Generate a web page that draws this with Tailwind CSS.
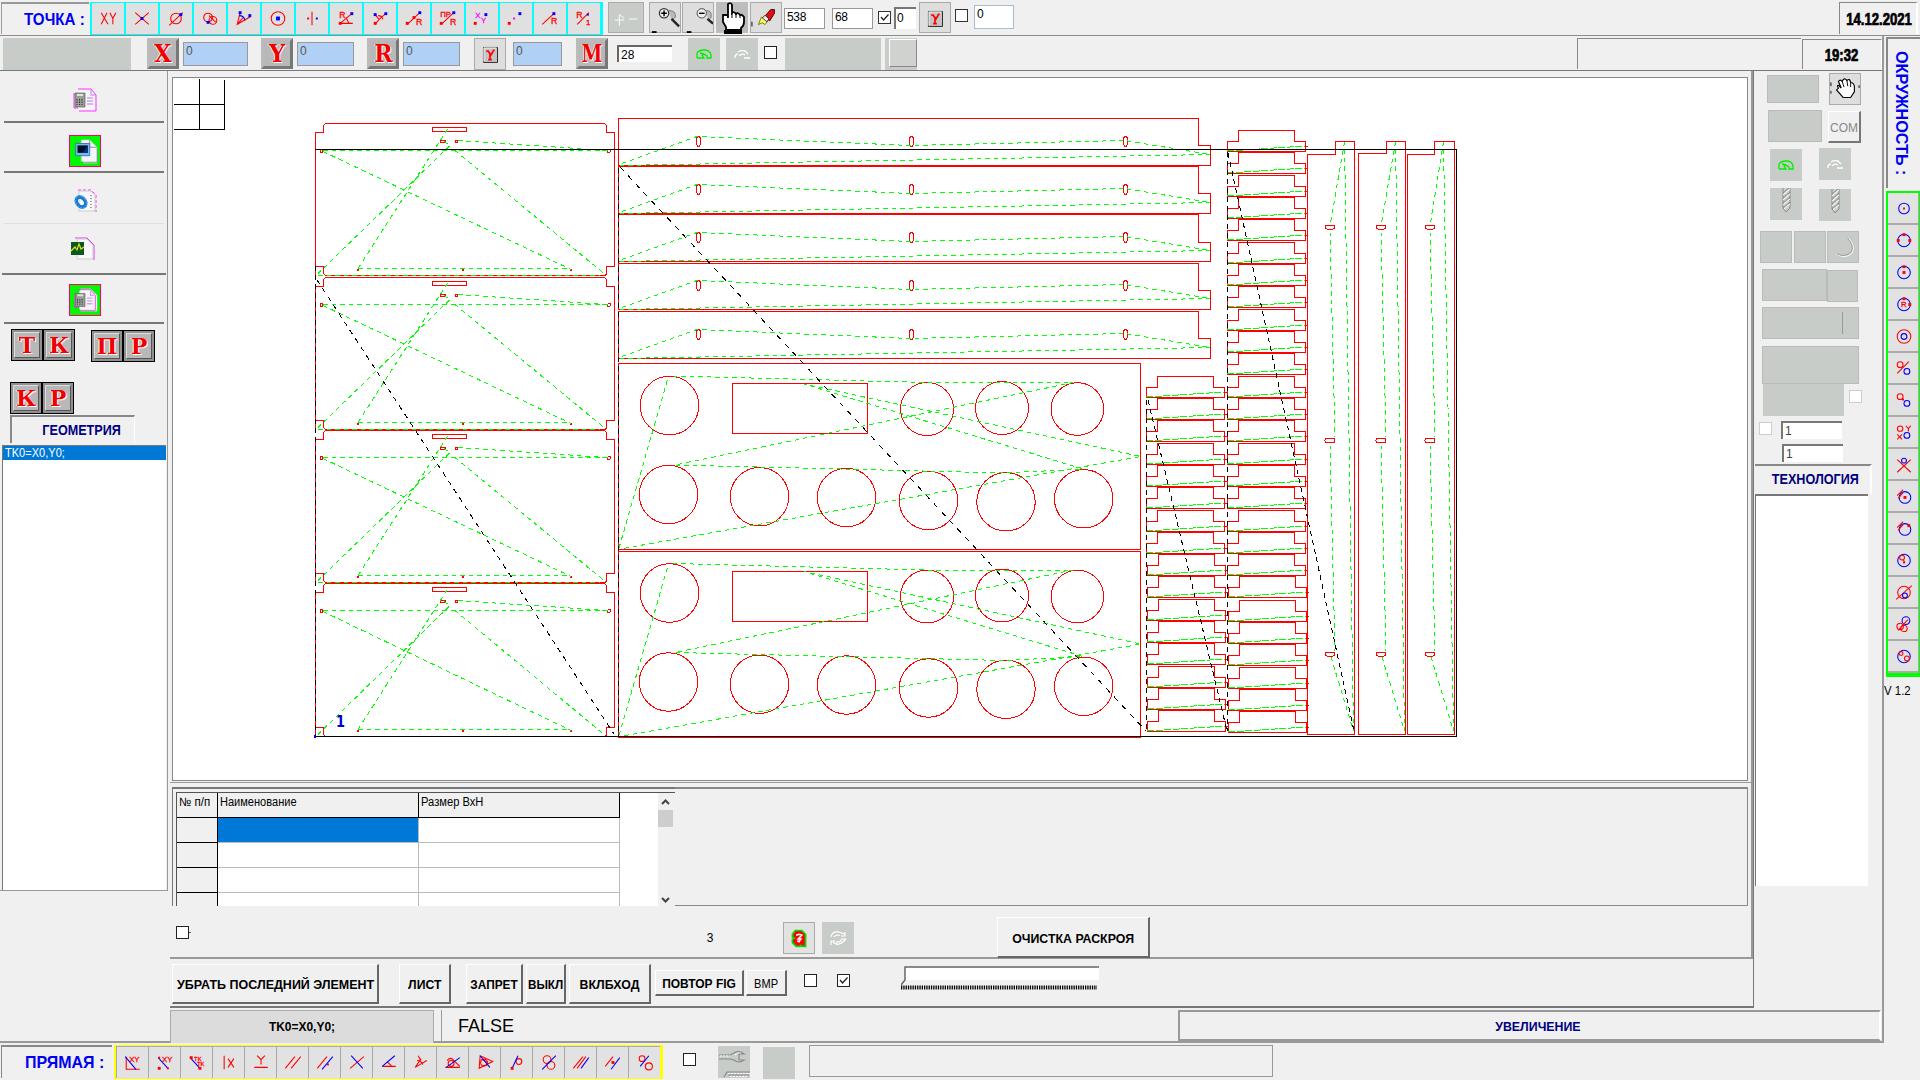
<!DOCTYPE html>
<html lang="ru">
<head>
<meta charset="utf-8">
<title>Раскрой</title>
<script src="https://cdn.jsdelivr.net/npm/@tailwindcss/browser@4"></script>
</head>
<body class="w-[1920px] h-[1080px] overflow-hidden bg-[#f0f0f0] font-['Liberation_Sans',sans-serif] text-black flex flex-col">
<svg class="hidden">
  <defs>
    <g id="undo" fill="none" stroke-width="1.3"><path d="M-7 4V-1Q-5 -4 0 -4Q6 -4 7 1V4H3V2Q0 -1 -2 1L0 4H-7M-4 -1L0 0"/></g>
    <g id="redo" fill="none" stroke="#fff" stroke-width="1.3"><path d="M-7 4V2Q-6 0 -4 0M-4 -2Q-1 -4 3 -3L6 0M-3 2Q0 -1 3 1M2 4H8"/></g>
    <g id="drill" fill="none" stroke="#8a8a8a"><path d="M-3 -16V4L0 8L4 4V-16"/><path stroke="#fff" d="M-3 -9L4 -15M-3 -4L4 -10M-3 1L4 -5M-2 5L4 0"/><path d="M-3 -11L3 -16M-3 -6L4 -12M-3 -1L4 -7M-3 4L4 -2"/></g>
    <g id="page"><path d="M-4 -10H6L11 -5V11H-4Z" fill="#f8f8ff" stroke="#bbb" stroke-width=".8"/><path d="M6 -10V-5H11Z" fill="#cdd" stroke="#999" stroke-width=".6"/></g>
    <g id="calc"><path d="M-7 -11H6L11 -5V11H-6M-11 -7V8H-7" fill="none" stroke="#f3f" stroke-width="1"/><path d="M-6 -10H6L10 -5V10H-6Z" fill="#f6f4fa"/><path d="M6 -10V-5H10M2 -2H8M2 1H8M2 4H8" stroke="#c9a6e8" stroke-width="1.4" fill="none"/><path d="M-10 -7H0V7H-10Z" fill="#9a9e96" stroke="#555" stroke-width=".6"/><path d="M-8 -5H-2" stroke="#dfe8d8" stroke-width="2"/><path d="M-8 -1V5M-5.500 -1V5M-3 -1V5" stroke="#333" stroke-dasharray="1.500 1"/></g>
    <g id="ygate"><path d="M-7 -7H8V9H-7Z" fill="#c4c4c4" stroke="#222"/><path d="M-6.500 8V-6.500H7" stroke="#fff" fill="none"/><path d="M-4 -3H-2L1 1L4 -4M0 0V6M-2 6H2M3 -4H5" stroke="red" stroke-width="1.800" fill="none"/></g>
  </defs>
</svg>

<!-- point toolbar -->
<header class="h-[36px] flex shrink-0 pl-px pt-[2px] border-b border-[#8c8c8c]">
  <div class="w-[88px] h-[32px] border-t-2 border-l border-[#999] text-[17px] leading-[32px] font-bold text-[#0000f0] pl-[22px] whitespace-nowrap"><span class="inline-block origin-left scale-x-[.89]">ТОЧКА :</span></div>
  <div id="bar-point" class="ml-px h-[33px] w-[513px] bg-[#00ffff] p-px pl-[2px] pt-px flex gap-[2px] text-[#c00]"></div>
  <div class="ml-[5px] w-[36px] h-[31px] bg-[#c8ccc8] border border-[#aaa]"><svg viewBox="-18 -16 36 32" stroke="#fff" fill="none"><path d="M-12 2H-2M-7 -4V8M-6 -3L-2 0M3 1H12"/></svg></div>
  <div class="ml-[5px] w-[32px] h-[31px] bg-[#dedede] border border-[#aaa]"><svg viewBox="-16 -16 32 32" fill="none"><path d="M4 -8Q12 -8 11 -1L7 3" fill="#bbb" stroke="#777"/><circle cx="-1" cy="-5" r="5" fill="#eee" stroke="#333" stroke-width="1.300"/><path d="M-4 -5H2M-1 -8V-2" stroke="#000" stroke-width="1.500"/><path d="M7 1L15 9" stroke="#222" stroke-width="2.500"/><path d="M-14 15H-9" stroke="#000" stroke-width="2"/></svg></div>
  <div class="ml-px w-[32px] h-[31px] bg-[#dedede] border border-[#aaa]"><svg viewBox="-16 -16 32 32" fill="none"><path d="M9 -8Q15 -8 14 -1L11 3" fill="#bbb" stroke="#777"/><circle cx="4" cy="-5" r="5" fill="#eee" stroke="#444"/><path d="M1 -5H7" stroke="#000" stroke-width="1.500"/><path d="M10 1L16 6" stroke="#222" stroke-width="2.500"/><path d="M-12 15H-7" stroke="#000" stroke-width="2"/></svg></div>
  <div class="ml-[2px] w-[32px] h-[31px] bg-[#bdbdbd]"><svg viewBox="-16 -16 32 32"><path d="M-4 -14Q-1 -16 0 -13V-5Q2 -7 4 -4Q6 -6 8 -3Q10 -4 12 -1V4Q12 8 9 10V12H-6V9L-9 4V-3H-5Q-4 -3 -4 0Z" fill="#fff" stroke="#000" stroke-width="1.800"/><path d="M0 -5V0M4 -4V0M8 -3V0" stroke="#000"/><path d="M-8 12H10V16H-8Z"/></svg></div>
  <div class="ml-[2px] w-[32px] h-[31px] bg-[#dedede] border border-[#aaa]"><svg viewBox="-16 -16 32 32"><path d="M-8 7L-5 -1L2 3L-1 7L-4 5Z" fill="#ff6" stroke="#770"/><path d="M-2 -1L5 -9H9V-5L4 3Z" fill="#e01010" stroke="#400"/><path d="M-4 0L1 4L3 1L-1 -3Z" fill="#eee" stroke="#333"/><path d="M-15 4V9" stroke="#000"/></svg></div>
  <div class="ml-[2px] mt-[6px] w-[41px] h-[21px] bg-white border border-[#999] text-[12px] leading-[17px] pl-[2px] tracking-tight">538</div>
  <div class="ml-[7px] mt-[6px] w-[41px] h-[21px] bg-white border border-[#999] text-[12px] leading-[17px] pl-[2px] tracking-tight">68</div>
  <div class="ml-[5px] mt-[9px] w-[13px] h-[13px] bg-white border border-[#333]"><svg viewBox="0 0 11 11" fill="none" stroke="#222" stroke-width="1.300"><path d="M2 5L4.500 8L9.500 2.500"/></svg></div>
  <div class="ml-[3px] mt-[5px] w-[22px] h-[22px] bg-white border-t-2 border-l-2 border-[#777] text-[12px] leading-[18px] pl-px">0</div>
  <div class="ml-[3px] w-[32px] h-[31px] bg-[#dedede] border border-[#aaa]"><svg viewBox="-16 -16 32 32"><use href="#ygate"/></svg></div>
  <div class="ml-[4px] mt-[7px] w-[13px] h-[13px] bg-white border border-[#333]"></div>
  <div class="ml-[6px] mt-[3px] w-[40px] h-[24px] bg-white border border-[#abc] text-[12px] leading-[16px] pl-[2px]">0</div>
  <div class="ml-auto mr-[2px] w-[79px] h-[32px] border-t border-l border-[#888] border-r-2 border-r-white text-[16px] font-bold leading-[33px] text-center whitespace-nowrap"><span class="inline-block scale-x-[.82] -translate-x-px [-webkit-text-stroke:.7px_black]">14.12.2021</span></div>
</header>

<div class="flex h-[1007px] shrink-0">
  <!-- everything left of the circle toolbar -->
  <div class="w-[1884px] flex flex-col border-r-2 border-[#999]">
    <div class="h-[35px] flex shrink-0 pt-[2px] pl-[3px] border-b border-[#777]">
      <div class="w-[128px] h-[32px] bg-[#c8ccc8]"></div>
      <div class="ml-[16px] w-[32px] h-[31px] border-[3px] border-t-[#bbb] border-l-[#bbb] border-r-[#777] border-b-[#777] bg-[#b8b8b8] font-['DejaVu_Serif',serif] font-bold text-[25px] leading-[25px] flex justify-center text-[#f00000] [text-shadow:1px_1px_0_white,-1px_0_0_white]"><span class="scale-x-[.9]">X</span></div>
      <div class="ml-[4px] mt-[4px] w-[65px] h-[24px] bg-[#b0d0f5] border border-[#999] text-[12px] leading-[16px] pl-[2px] text-[#555]">0</div>
      <div class="ml-[13px] w-[32px] h-[31px] border-[3px] border-t-[#bbb] border-l-[#bbb] border-r-[#777] border-b-[#777] bg-[#b8b8b8] font-['DejaVu_Serif',serif] font-bold text-[25px] leading-[25px] flex justify-center text-[#f00000] [text-shadow:1px_1px_0_white,-1px_0_0_white]"><span class="scale-x-[.9]">Y</span></div>
      <div class="ml-[4px] mt-[4px] w-[57px] h-[24px] bg-[#b0d0f5] border border-[#999] text-[12px] leading-[16px] pl-[2px] text-[#555]">0</div>
      <div class="ml-[13px] w-[32px] h-[31px] border-[3px] border-t-[#bbb] border-l-[#bbb] border-r-[#777] border-b-[#777] bg-[#b8b8b8] font-['DejaVu_Serif',serif] font-bold text-[25px] leading-[25px] flex justify-center text-[#f00000] [text-shadow:1px_1px_0_white,-1px_0_0_white]"><span class="scale-x-[.88]">R</span></div>
      <div class="ml-[4px] mt-[4px] w-[57px] h-[24px] bg-[#b0d0f5] border border-[#999] text-[12px] leading-[16px] pl-[2px] text-[#555]">0</div>
      <div class="ml-[14px] w-[32px] h-[32px] bg-[#dedede] border border-[#aaa]"><svg viewBox="-16 -16 32 32"><use href="#ygate"/></svg></div>
      <div class="ml-[7px] mt-[4px] w-[49px] h-[24px] bg-[#b0d0f5] border border-[#999] text-[12px] leading-[16px] pl-[2px] text-[#555]">0</div>
      <div class="ml-[14px] w-[32px] h-[31px] border-[3px] border-t-[#bbb] border-l-[#bbb] border-r-[#777] border-b-[#777] bg-[#b8b8b8] font-['DejaVu_Serif',serif] font-bold text-[25px] leading-[25px] flex justify-center text-[#f00000] [text-shadow:1px_1px_0_white,-1px_0_0_white]"><span class="scale-x-[.75]">M</span></div>
      <div class="ml-[9px] mt-[7px] w-[55px] h-[17px] bg-white border-t-2 border-l-2 border-[#666] text-[12px] leading-[16px] pl-[2px]">28</div>
      <div class="ml-[16px] w-[32px] h-[32px] bg-[#c8ccc8]"><svg viewBox="-16 -16 32 32" stroke="#00f000"><use href="#undo"/></svg></div>
      <div class="ml-[6px] w-[32px] h-[32px] bg-[#c8ccc8]"><svg viewBox="-16 -16 32 32"><use href="#redo"/></svg></div>
      <div class="ml-[6px] mt-[8px] w-[13px] h-[13px] bg-white border border-[#222]"></div>
      <div class="ml-[8px] w-[96px] h-[32px] bg-[#c8ccc8]"></div>
      <div class="ml-[4px] w-[32px] h-[32px] bg-[#c8ccc8] pl-[4px] pt-px"><div class="w-[28px] h-[28px] border border-[#888] border-t-white border-l-white bg-[#d0d2d0]"></div></div>
      <div class="ml-[660px] w-[224px] h-[31px] border-t border-l border-[#888]"></div>
      <div class="ml-px mt-px w-[80px] h-[30px] border-t border-l border-[#888] border-r border-r-white text-[16px] font-bold leading-[31px] text-center"><span class="inline-block scale-x-[.82] -translate-x-px [-webkit-text-stroke:.7px_black]">19:32</span></div>
    </div>

    <div class="h-[937px] flex shrink-0">
      <!-- left column -->
      <aside class="w-[170px] flex flex-col">
        <div class="h-[820px] flex flex-col border-r border-b border-[#999] mr-[2px] pt-px pl-[2px] pr-px">
          <div class="h-[51px] flex justify-center items-center border-b-2 border-[#777] mx-[2px]"><svg class="w-[32px] h-[32px] translate-y-[4px] translate-x-px mr-px" viewBox="-16 -16 32 32"><use href="#calc"/></svg></div>
          <div class="h-[50px] flex justify-center items-center border-b-2 border-[#777] mx-[2px]"><svg class="w-[32px] h-[32px] translate-y-[4px] translate-x-px mr-px bg-[#00f800] border border-[#f06]" viewBox="-16 -16 32 32"><use href="#page"/><path d="M-4 -12L5 -12L13 -4V13H-2" fill="#f4f6ff"/><path d="M5 -12V-4H13M13 -3V12H-3" fill="none" stroke="#888"/><path d="M-10 -8H5V5H-10Z" fill="#7ab8f0" stroke="#37a"/><path d="M-8 -6H3V2H-8Z" fill="#012"/><path d="M-3 2L3 -5V2Z" fill="#039"/></svg></div>
          <div class="h-[51px] flex justify-center items-center border-b border-[#e0e0e0] mx-[2px]"><svg class="w-[32px] h-[32px] translate-y-[3px] translate-x-px" viewBox="-16 -16 32 32"><path d="M-7 -11H6L11 -6V11" fill="none" stroke="#f3f" stroke-dasharray="3 2"/><path d="M-6 -10H6L10 -6V10H-6Z" fill="#f8f8fc" stroke="#ccc"/><path d="M6 -6V8" stroke="#444" stroke-dasharray="1 2"/><ellipse cx="-4" cy="1" rx="4" ry="5.500" transform="rotate(-40 -4 1)" fill="none" stroke="#1678d0" stroke-width="3.500"/><ellipse cx="-4" cy="1" rx="5" ry="6.500" transform="rotate(-40 -4 1)" fill="none" stroke="#3aa0f0" stroke-width="1.500" stroke-dasharray="2 1"/></svg></div>
          <div class="h-[51px] flex justify-center items-center border-b-2 border-[#777]"><svg class="w-[32px] h-[32px] translate-y-px mr-[3px]" viewBox="-16 -16 32 32"><path d="M-8 -11H4L11 -4V11" fill="none" stroke="#e3e"/><path d="M-6 -10H4L10 -4V10H-6Z" fill="#f8f8fc" stroke="#ccc"/><path d="M-12 -7H1V6H-12Z" fill="#0b5a1c"/><path d="M-12 2L-8 -2L-6 1L-4 -5L-2 0L1 -2" fill="none" stroke="#dfe02a" stroke-width="1.200"/></svg></div>
          <div class="h-[49px] flex justify-center items-center border-b-2 border-[#777] mx-[2px]"><svg class="w-[32px] h-[32px] translate-y-[2px] translate-x-px mr-px bg-[#00f800] border border-[#f06]" viewBox="-16 -16 32 32"><path d="M-5 -12H6L13 -5V12H-5" fill="#f4f4fc"/><use href="#calc"/></svg></div>
          <div class="h-[53px] flex pt-[5px] pl-[9px] font-['DejaVu_Serif',serif] font-bold text-[22px] leading-[24px] text-center text-[#f00000] [text-shadow:1px_1px_0_white,-1px_0_0_white]">
            <div class="w-[32px] h-[32px] border border-black bg-[#909090] p-[2px]"><div class="size-full border border-[#ddd] border-r-[#555] border-b-[#555] bg-[#b8b8b8]">Т</div></div>
            <div class="w-[32px] h-[32px] border border-black bg-[#909090] p-[2px]"><div class="size-full border border-[#ddd] border-r-[#555] border-b-[#555] bg-[#b8b8b8]">К</div></div>
            <div class="ml-[16px] mt-px w-[32px] h-[32px] border border-black bg-[#909090] p-[2px]"><div class="size-full border border-[#ddd] border-r-[#555] border-b-[#555] bg-[#b8b8b8]">П</div></div>
            <div class="mt-px w-[32px] h-[32px] border border-black bg-[#909090] p-[2px]"><div class="size-full border border-[#ddd] border-r-[#555] border-b-[#555] bg-[#b8b8b8]">Р</div></div>
          </div>
          <div class="h-[37px] flex pt-[5px] pl-[8px] font-['DejaVu_Serif',serif] font-bold text-[22px] leading-[24px] text-center text-[#f00000] [text-shadow:1px_1px_0_white,-1px_0_0_white]">
            <div class="w-[32px] h-[32px] border border-black bg-[#909090] p-[2px]"><div class="size-full border border-[#ddd] border-r-[#555] border-b-[#555] bg-[#b8b8b8]">К</div></div>
            <div class="w-[32px] h-[32px] border border-black bg-[#909090] p-[2px]"><div class="size-full border border-[#ddd] border-r-[#555] border-b-[#555] bg-[#b8b8b8]">Р</div></div>
          </div>
          <div class="ml-[8px] mt-px w-[125px] h-[28px] border-t-2 border-l-2 border-[#888] border-r border-r-white text-[14px] leading-[27px] font-bold text-[#000080] text-center pl-[17px]"><span class="inline-block scale-x-[.9] whitespace-nowrap -mx-4">ГЕОМЕТРИЯ</span></div>
          <div class="mt-[2px] h-[446px] bg-white border-t border-l border-[#777]"><div class="h-[14px] bg-[#0078d7] text-white text-[12px] leading-[15px] pl-[2px]"><span class="inline-block origin-left scale-x-[.92]">TK0=X0,Y0;</span></div></div>
        </div>
      </aside>

      <!-- centre column -->
      <main class="w-[1583px] flex flex-col">
        <div class="h-[712px] pt-[6px] pl-[2px] pr-[5px] border-b border-r-2 border-[#999] shrink-0">
          <div class="w-[1576px] h-[704px] bg-white border border-[#888]"><svg id="sheet" class="block w-[1574px] h-[702px]" viewBox="173 78 1574 702" fill="none" shape-rendering="crispEdges"></svg></div>
        </div>
        <div class="h-[124px] shrink-0 flex pt-[4px] pl-[2px] pr-[3px] border-r-2 border-[#999]">
          <div class="w-[503px] h-[119px] border-t-2 border-l border-[#777] pt-[3px] pl-[3px]">
            <div class="h-[114px] overflow-hidden bg-white border-t border-l border-[#555] flex">
              <div class="grid grid-cols-[41px_201px_201px] grid-rows-[25px_25px_25px_25px_25px] w-[443px] text-[12px] leading-[19px] whitespace-nowrap">
                <div class="bg-[#f0f0f0] border-r border-b border-black pl-[2px]"><span class="inline-block origin-left scale-x-[.96]">№ п/п</span></div><div class="bg-[#f0f0f0] border-r border-b border-black pl-[2px]"><span class="inline-block origin-left scale-x-[.92]">Наименование</span></div><div class="bg-[#f0f0f0] border-r border-b border-black pl-[2px]"><span class="inline-block origin-left scale-x-[.93]">Размер ВхН</span></div>
                <div class="bg-[#f0f0f0] border-r border-b border-black"></div><div class="bg-[#0078d7] border-r border-b border-[#bbb]"></div><div class="border-r border-b border-[#bbb]"></div>
                <div class="bg-[#f0f0f0] border-r border-b border-black"></div><div class="border-r border-b border-[#bbb]"></div><div class="border-r border-b border-[#bbb]"></div>
                <div class="bg-[#f0f0f0] border-r border-b border-black"></div><div class="border-r border-b border-[#bbb]"></div><div class="border-r border-b border-[#bbb]"></div>
                <div class="bg-[#f0f0f0] border-r border-b border-black"></div><div class="border-r border-b border-[#bbb]"></div><div class="border-r border-b border-[#bbb]"></div>
              </div>
              <div class="ml-auto w-[17px] h-[113px] bg-[#f0f0f0] flex flex-col items-center pr-[2px]">
                <svg class="w-[15px] h-[17px]" viewBox="0 0 15 17" fill="none" stroke="#444" stroke-width="2"><path d="M4 11L7.500 7.500L11 11"/></svg>
                <div class="w-[15px] h-[17px] bg-[#cdcdcd]"></div>
                <svg class="mt-auto w-[15px] h-[12px]" viewBox="0 0 15 12" fill="none" stroke="#444" stroke-width="2"><path d="M4 4L7.500 7.500L11 4"/></svg>
              </div>
            </div>
          </div>
          <div class="flex-1 h-[119px] border-t-2 border-b border-r border-[#888]"></div>
        </div>
        <div class="h-[52px] shrink-0 flex pl-[6px] border-b-2 border-r-2 border-[#999]">
          <div class="mt-[19px] w-[13px] h-[13px] bg-white border border-[#222]"></div><div class="mt-[25px] w-[2px] h-px bg-[#555]"></div>
          <div class="w-[20px] ml-[506px] mt-[23px] text-[12px] leading-[16px] text-center pl-[6px]">3</div>
          <div class="ml-[66px] mt-[15px] w-[32px] h-[32px] border border-[#aaa] bg-[#e2e2e2]"><svg viewBox="-16 -16 32 32"><path d="M-7 -4L-4 -8H3L7 -4V9H3L2 8L1 9H-3L-7 5V1L-5 0L-7 -1Z" fill="red" stroke="#00e000" stroke-width="1.800"/><path d="M-3 -3L0 -4L3 -3L-1 1H2L0 4L-2 3" fill="none" stroke="#fff" stroke-width="1.600"/></svg></div>
          <div class="ml-[7px] mt-[15px] w-[32px] h-[32px] bg-[#c8ccc8]"><svg viewBox="-16 -16 32 32" fill="none" stroke="#fff" stroke-width="1.200"><path d="M-7 -1Q-6 -7 1 -6L6 -4M7 -6V-2H3M-4 -1Q-3 -3 2 -3M-7 7V3H-3M-5 4Q0 9 6 3L8 1M-2 4Q2 5 4 1H8"/></svg></div>
          <div class="ml-[143px] mt-[10px] w-[153px] h-[41px] border-r-2 border-b-2 border-[#666] border-t border-t-white border-l border-l-white text-[13px] font-bold leading-[41px] text-center whitespace-nowrap"><span class="inline-block scale-x-[.95] -mx-4">ОЧИСТКА РАСКРОЯ</span></div>
        </div>
        <div class="h-[49px] shrink-0 flex pt-[5px] pl-[2px] border-b-2 border-[#777] text-[13px] font-bold text-center whitespace-nowrap">
          <div class="w-[207px] h-[40px] border-r-2 border-b-2 border-[#666] border-t border-t-white border-l border-l-white leading-[39px]"><span class="inline-block scale-x-[.96] translate-x-px -mx-4">УБРАТЬ ПОСЛЕДНИЙ ЭЛЕМЕНТ</span></div>
          <div class="ml-[20px] w-[52px] h-[40px] border-r-2 border-b-2 border-[#666] border-t border-t-white border-l border-l-white leading-[39px]"><span class="inline-block scale-x-[.94] -mx-4">ЛИСТ</span></div>
          <div class="ml-[15px] w-[57px] h-[40px] border-r-2 border-b-2 border-[#666] border-t border-t-white border-l border-l-white leading-[39px]"><span class="inline-block scale-x-[.91] -mx-4">ЗАПРЕТ</span></div>
          <div class="ml-[3px] w-[40px] h-[40px] border-r-2 border-b-2 border-[#666] border-t border-t-white border-l border-l-white leading-[39px]"><span class="inline-block scale-x-[.9] -mx-4">ВЫКЛ</span></div>
          <div class="ml-[3px] w-[82px] h-[40px] border-r-2 border-b-2 border-[#666] border-t border-t-white border-l border-l-white leading-[39px]"><span class="inline-block scale-x-[.95] -mx-4">ВКЛБХОД</span></div>
          <div class="ml-[4px] mt-[6px] w-[89px] h-[26px] border-r-2 border-b-2 border-[#666] border-t border-t-white border-l border-l-white leading-[25px]"><span class="inline-block scale-x-[.92] -mx-4">ПОВТОР FIG</span></div>
          <div class="ml-[2px] mt-[6px] w-[41px] h-[26px] border-r-2 border-b-2 border-[#666] border-t border-t-white border-l border-l-white leading-[25px] font-normal"><span class="inline-block scale-x-[.85] -mx-4">BMP</span></div>
          <div class="ml-[17px] mt-[10px] w-[13px] h-[13px] bg-white border border-[#222]"></div>
          <div class="ml-[20px] mt-[10px] w-[13px] h-[13px] bg-white border border-[#222]"><svg viewBox="0 0 11 11" fill="none" stroke="#222" stroke-width="1.300"><path d="M2 5L4.500 8L9.500 2.500"/></svg></div>
          <svg class="ml-[51px] mt-px w-[200px] h-[28px]" viewBox="0 0 200 28"><path d="M4 2H198V15H4Z" fill="#fff"/><path d="M198 2H4V15L0 20" fill="none" stroke="#666" stroke-width="1.500"/><path d="M0 22.500H196" stroke="#000" stroke-width="4" stroke-dasharray="1.300 1"/></svg>
        </div>
      </main>

      <!-- tool panel -->
      <aside class="w-[129px] flex flex-col border-l border-[#777] pl-px pt-[2px]">
        <div class="h-[37px] flex pl-[12px]"><div class="mt-[2px] w-[52px] h-[28px] bg-[#c8ccc8] border border-[#bbb]"></div><div class="ml-[10px] w-[32px] h-[32px] bg-[#dedede] border border-[#aaa]"><svg viewBox="-16 -16 32 32"><path d="M-7 -1Q-9 -4 -7 -4L-4 -1L-7 -8Q-5 -11 -3 -8L-2 -10Q0 -12 2 -9Q5 -12 6 -7Q9 -7 10 -3V3L6 9H-2L-9 1Z" fill="#fff" stroke="#000" stroke-width="1.200"/><path d="M-3 -8L-1 -2M2 -9L3 -3M6 -7V-2M-15 -7V-3M-15 2V5M15 -4V-1" stroke="#000"/></svg></div></div>
        <div class="h-[38px] flex pl-[13px]"><div class="w-[54px] h-[32px] bg-[#c8ccc8] border border-[#bbb]"></div><div class="ml-[6px] mt-px w-[33px] h-[32px] border-r-2 border-b-2 border-[#777] border-t border-t-white border-l border-l-white text-[12px] leading-[32px] text-center text-[#888]">COM</div></div>
        <div class="h-[40px] flex pl-[15px]"><div class="mt-px w-[32px] h-[32px] bg-[#c8ccc8]"><svg viewBox="-16 -16 32 32" stroke="#00f000"><use href="#undo"/></svg></div><div class="ml-[17px] w-[32px] h-[32px] bg-[#c8ccc8]"><svg viewBox="-16 -16 32 32"><use href="#redo"/></svg></div></div>
        <div class="h-[43px] flex pl-[15px]"><div class="w-[32px] h-[32px] bg-[#c8ccc8]"><svg viewBox="-16 -16 32 32"><use href="#drill"/></svg></div><div class="mt-px ml-[17px] w-[32px] h-[32px] bg-[#c8ccc8]"><svg viewBox="-16 -16 32 32"><use href="#drill"/></svg></div></div>
        <div class="h-[38px] flex gap-[2px] pl-[5px]"><div class="w-[32px] h-[32px] bg-[#c8ccc8] border border-[#bbb]"></div><div class="w-[32px] h-[32px] bg-[#c8ccc8] border border-[#bbb]"></div><div class="-ml-px w-[32px] h-[32px] bg-[#c8ccc8] border border-[#bbb]"><svg viewBox="-16 -16 32 32" fill="none"><path d="M6 -9Q13 -2 10 6Q3 14 -8 7" stroke="#fff"/><path d="M5 -9Q12 -2 9 5Q2 12 -7 7" stroke="#999"/></svg></div></div>
        <div class="h-[38px] flex pl-[7px]"><div class="w-[65px] h-[32px] bg-[#c8ccc8] border border-[#bbb]"></div><div class="mt-px w-[31px] h-[32px] bg-[#c8ccc8] border border-[#bbb]"></div></div>
        <div class="h-[39px] flex pl-[7px]"><div class="w-[97px] h-[32px] bg-[#c8ccc8] border border-[#bbb] pl-[79px] pt-[4px]"><div class="w-px h-[22px] bg-[#999]"></div></div></div>
        <div class="h-[38px] flex pl-[7px]"><div class="w-[97px] h-[38px] bg-[#c8ccc8] border border-[#bbb]"></div></div>
        <div class="h-[37px] flex pl-[8px]"><div class="w-[81px] h-[32px] bg-[#c8ccc8]"></div><div class="ml-[5px] mt-[6px] w-[13px] h-[13px] bg-white border border-[#ccc]"></div></div>
        <div class="h-[23px] flex pl-[4px]"><div class="mt-px w-[13px] h-[13px] bg-white border border-[#ccc]"></div><div class="ml-[9px] w-[61px] h-[18px] bg-white border-t-2 border-l-2 border-[#777] text-[12px] leading-[16px] pl-[2px] text-[#444]">1</div></div>
        <div class="h-[20px] flex pl-[27px]"><div class="w-[61px] h-[18px] bg-white border-t-2 border-l-2 border-[#777] text-[12px] leading-[16px] pl-[2px] text-[#444]">1</div></div>
        <div class="w-[117px] h-[30px] border-t-2 border-[#888] border-r-2 border-r-white text-[14px] leading-[27px] font-bold text-[#000080] text-center pl-[5px]"><span class="inline-block scale-x-[.9] -mx-4 whitespace-nowrap">ТЕХНОЛОГИЯ</span></div>
        <div class="w-[113px] h-[392px] bg-white border-t-2 border-l border-[#777]"></div>
      </aside>
    </div>

    <!-- status row -->
    <div class="h-[35px] shrink-0 flex pt-[2px] pl-[170px] border-b-2 border-[#999]">
      <div class="w-[264px] h-[33px] border border-[#aaa] border-b-0 bg-[#dcdcdc] text-[13px] font-bold leading-[31px] text-center"><span class="inline-block scale-x-[.92]">TK0=X0,Y0;</span></div>
      <div class="ml-[7px] w-[736px] h-[32px] border-l border-[#999] text-[18px] leading-[33px] pl-[16px]"><span class="inline-block origin-left">FALSE</span></div>
      <div class="ml-px w-[703px] h-[31px] border-2 border-[#999] border-r-white text-[13px] font-bold text-[#000080] leading-[29px] text-center pl-[17px]"><span class="inline-block scale-x-[.95]">УВЕЛИЧЕНИЕ</span></div>
    </div>
  </div>

  <!-- circle toolbar -->
  <div class="w-[36px] flex flex-col">
    <div class="mt-px ml-[2px] w-[34px] h-[151px] border-t-2 border-l-2 border-[#888] pt-[12px] pr-[7px] text-[17px] font-bold text-[#0000f0] leading-[24px] [writing-mode:vertical-rl] whitespace-nowrap"><span class="inline-block origin-top scale-y-[.95]">ОКРУЖНОСТЬ :</span></div>
    <div id="bar-circle" class="mt-[3px] ml-[2px] w-[34px] h-[486px] bg-[#00ff00] pt-[2px] pl-[2px] pr-px flex flex-col shrink-0"></div>
    <div class="mt-[6px] text-[13px] leading-[16px] whitespace-nowrap"><span class="inline-block origin-left scale-x-[.88]">V 1.2</span></div>
  </div>
</div>

<!-- line toolbar -->
<footer class="h-[37px] flex shrink-0 pl-px pt-[2px]">
  <div class="w-[111px] h-[33px] border-t-2 border-l border-[#888] text-[17px] leading-[31px] font-bold text-[#0000f0] pl-[23px] whitespace-nowrap"><span class="inline-block origin-left scale-x-[.94]">ПРЯМАЯ :</span></div>
  <div id="bar-line" class="ml-[2px] w-[549px] h-[34px] bg-[#ffff00] pt-px pl-[2px] flex"></div>
  <div class="ml-[20px] mt-[8px] w-[13px] h-[13px] bg-white border border-[#222]"></div>
  <div class="ml-[22px] mt-px w-[32px] h-[32px] bg-[#c8ccc8]"><svg viewBox="-16 -16 32 32" fill="none" stroke="#888" stroke-width="1.200"><path d="M-15 -7H-4L0 -9Q5 -12 10 -8H5V-2H10Q5 2 0 -2L-4 -3H-15M-10 15L-7 10H16M-6 13H15"/><path d="M-14 -6H-4M1 -7Q4 -10 7 -9M-6 11.500H16M-4 14.500H14" stroke="#fff" stroke-dasharray="2 1"/></svg></div>
  <div class="ml-[13px] mt-[2px] w-[32px] h-[32px] bg-[#c8ccc8]"></div>
  <div class="ml-[14px] w-[464px] h-[32px] border border-[#999]"></div>
</footer>

<script>
const dot = (x, y, c = 'red', s = 3) => `<rect x="${x - s / 2}" y="${y - s / 2}" width="${s}" height="${s}" fill="${c}" stroke="none"/>`;
const ln = (d, c = 'red') => `<path d="${d}" stroke="${c}"/>`;
const ci = (x, y, q, c = 'red') => `<circle cx="${x}" cy="${y}" r="${q}" stroke="${c}"/>`;
const tx = (x, y, s, z = 9, c = 'red') => `<text x="${x}" y="${y}" font-size="${z}" fill="${c}" stroke="${c}" stroke-width=".3">${s}</text>`;
const B = '#00f', M = '#f0f';

const pointIcons = [
  ln('M-7 -6L0 6M-1 -6L-7 6M2 -6L5 0V6M8 -6L5 0'),
  ln('M-7 -6L7 6M7 -6L-7 6') + dot(0, 0, B),
  ci(0, 0, 5.5) + ln('M-7 7L7 -6') + dot(5, -4, B),
  ci(-2, -1, 4.5) + ci(3, 2, 4) + ln('M-1 -3L6 4') + dot(-2, 4, B),
  ln('M-4 -6L-7 6L7 -2M-7 6L-1 -1') + ln('M-5 -3Q0 -3 1 2', B) + dot(-4, -6, B) + dot(6, -3, B),
  ci(0, 0, 7) + dot(0, 0, B, 4),
  ln('M0 -7V7') + dot(-4, 0, 'red', 2) + dot(5, 0, B, 2),
  tx(-7, -1, 'R') + ln('M-6 5H7M-6 5L6 -5M0 -1L3 5') + dot(-6, 5) + dot(6, -5, B),
  ln('M-5 -4L-1 1L-5 6M-1 1L6 -5M-2 -3Q2 -3 3 1') + dot(-5, 5) + dot(-5, -4, B) + dot(6, -5, B),
  ln('M-7 6L6 -6') + dot(-7, 5) + dot(0, -1) + dot(6, -6, B) + tx(2, 7, 'R'),
  tx(-8, -2, 'ПР', 8) + ln('M-7 6L6 -6') + dot(-7, 5) + dot(6, -6, B) + tx(2, 7, 'R'),
  tx(-7, -1, 'X', 8, M) + tx(-1, 5, 'Y', 8, M) + dot(-7, 5) + dot(4, -4, B),
  dot(-7, 5) + dot(-2, 0, M, 2) + dot(4, -5, B),
  ln('M-8 6L4 -5') + dot(4, -5, B) + tx(1, 6, 'R'),
  tx(-8, -1, 'R') + ln('M-7 6L5 -6') + dot(4, -4, B, 2) + tx(2, 7, '1', 8),
];
const circleIcons = [
  ci(0, 0, 5.5, B) + dot(0, 0, 'red', 2),
  ci(0, 0, 6.5, B) + dot(0, -6) + dot(-6, 0) + dot(6, 0),
  ci(0, 0, 6.5, B) + dot(0, -6) + dot(0, 0),
  ci(0, 0, 6.5, B) + dot(0, -6) + dot(6, 0) + tx(-3, 3, 'R', 8),
  ci(0, 0, 7) + ci(0, 0, 3, B),
  ci(-4, -4, 3) + ln('M-7 5L5 -7') + ci(3, 3, 3, B),
  ci(-4, -4, 3) + dot(-1, -1, 'red', 2) + ci(3, 3, 3, B),
  ci(-4, -4, 2.8) + ln('M2 -7L4.5 -4V-1M7 -7L4.500 -4M-7 2L-2 7M-2 2L-7 7') + ci(3, 3, 3, B),
  ln('M-7 -5L7 8M7 -5L-7 8') + ci(0, -4, 2.5, B),
  ci(1, 1, 6, B) + ln('M-7 -1L-1 -7M-6 2L-1 -4') + dot(1, 1),
  ci(1, 1, 6, B) + ln('M-7 -1L-1 -7M-6 2L-1 -4') + dot(5, -3),
  ci(0, 0, 6.5, B) + ci(-2, -3, 2.5) + dot(0, 2, 'red', 2) + ln('M-1 -1L1 2'),
  ci(0, 0, 6.5) + ln('M-8 7L8 -7') + ci(1, 3, 2.5, B),
  ci(2, -4, 4, B) + ci(-4, 2, 3.3) + ci(0, 4, 3.3) + ln('M-6 6L4 -5'),
  ci(0, 0, 6.5, B) + ci(-3, -3, 2) + ci(3, 2, 2.5),
];
const lineIcons = [
  ln('M-7 -6V7H7') + ln('M-8 -6L3 7', B) + tx(-4, -1, 'XY', 8),
  ln('M-7 -5L3 6', B) + dot(-6, -5, 'red', 2) + dot(-6, 6) + dot(3, 6, 'red', 2) + tx(-3, -1, 'XY', 8),
  ln('M-7 -5L3 6', B) + dot(-6, -5) + dot(3, 6) + tx(-3, -2, 'TK', 6) + tx(0, 4, 'TK', 6),
  ln('M-5 -7V7M-1 -4L5 5M5 -4L-1 5'),
  ln('M-7 5H7M-4 -7L0 -3V2M4 -7L0 -3'),
  ln('M-8 6L2 -6M-2 6L8 -6'),
  ln('M-8 6L2 -6') + ln('M-3 7L8 -6', B) + dot(3, 2, 'red', 2),
  ln('M7 -6L-7 6') + ln('M-6 -7L6 6', B),
  ln('M-7 4H7M-2 -1L3 4') + ln('M-7 4L6 -7', B),
  ln('M-3 -7L0 -2M-6 5L6 -2M-6 5L0 -4M-4 -2Q0 -2 2 2'),
  ln('M-8 5H7M-6 -2Q-3 -6 0 -3L7 4') + ci(-2, 1, 3) + ln('M-7 5L7 -5', B),
  ln('M-5 -7L-6 6L8 -1ZM-3 -3L3 0') + ci(-1, 0, 3.5) + ln('M-5 -7L5 5', B),
  ci(2, -1, 3) + ln('M-5 6L1 -7', B) + dot(-5, 6),
  ci(-2, -3, 4) + ci(2, 3, 4) + ln('M-7 7L7 -7', B),
  ln('M-8 6L2 -6M-4 6L5 -6') + ln('M0 6L8 -5', B),
  ln('M-8 4L0 -6') + ln('M-2 7L7 -5', B) + dot(0, 0),
  ci(-3, -4, 3) + ci(4, 4, 3.6) + ln('M-5 4L4 -7', B),
];
const icon = s => `<svg viewBox="-16 -16 32 32" fill="none" stroke-width="1.1" class="w-[32px] h-[31px] font-['Liberation_Sans',sans-serif]">${s}</svg>`;
document.getElementById('bar-point').innerHTML = pointIcons.map(s => `<div class="w-[32px] h-[31px] bg-[#e0e0e0]">${icon(s)}</div>`).join('');
document.getElementById('bar-circle').innerHTML = circleIcons.map(s => `<div class="w-[31px] h-[32px] bg-[#e2e2e2] border-b-2 border-r border-[#aaa] overflow-hidden">${icon(s)}</div>`).join('');
document.getElementById('bar-line').innerHTML = lineIcons.map(s => `<div class="w-[32px] h-[32px] bg-[#e2e2e2] border-l border-t border-[#aaa] overflow-hidden">${icon(s)}</div>`).join('');

// cutting sheet
const out = [];
const red = d => out.push(`<path d="${d}" stroke="red"/>`);
const green = d => out.push(`<path d="${d}" stroke="#0f0" stroke-dasharray="4.500 4"/>`);
const black = (d, dash = '5 4') => out.push(`<path d="${d}" stroke="#000" stroke-dasharray="${dash}"/>`);
const circle = (x, y, q) => out.push(`<circle cx="${x}" cy="${y}" r="${q}" stroke="red"/>`);

out.push('<path d="M174 104.500H224M199.500 79V129M224.500 80V129M174 129.500H225" stroke="#000"/>');

// side panels
for (const [t, m] of [[123.5, 275.5], [277.5, 429.5], [430.5, 582.5], [583.5, 736.5]]) {
  red(`M325.500 ${t}H604.500L606.500 ${t + 2}V${t + 9}H614.500V${m - 9}H606.500V${m - 2}L605.500 ${m}H325.500L323.500 ${m - 2}V${m - 9}H315.500V${t + 9}H323.500V${t + 2}Z`);
  red(`M315.500 ${m - 9}V${m}`);
  red(`M432.500 ${t + 4}H466.500V${t + 8}H432.500Z`);
  red(`M440.500 ${t + 17}H445.500V${t + 19}H440.500ZM455.500 ${t + 17}H457.500V${t + 19}H455.500Z`);
  circle(321.5, t + 27.5, 1.5); circle(609, t + 27.5, 1.5);
  for (const x of [358, 463, 571]) out.push(`<rect x="${x - 1}" y="${m - 7}" width="2" height="2" fill="red"/>`);
  green(`M318 ${m - 2}L450 ${t + 22}L444 ${t + 18}`);
  green(`M358 ${m - 7}L448 ${t + 5}`);
  green(`M323 ${t + 28}L571 ${m - 6}`);
  green(`M455 ${t + 27}L604 ${m - 2}`);
  green(`M458 ${t + 17}L607 ${t + 27}`);
  green(`M323 ${t + 27}H609`);
  green(`M358 ${m - 7}H571`);
  green(`M318 ${m}H600`);
}

// rails
for (const [t, s, m] of [[118.5, 145.5, 165.5], [166.5, 193.5, 213.5], [214.5, 242.5, 261.5], [263.5, 290.5, 309.5], [311.5, 338.5, 358.5]]) {
  red(`M618.500 ${t}H1198.500V${s}H1210.500V${m}H618.500Z`);
  for (const x of [698.5, 911.5, 1125.5]) red(`M${x - 1} ${m - 29}h2l1 2v5l-1 3h-2l-1 -3v-5Z`);
  green(`M622 ${m - 2}L697 ${m - 29}L911 ${m - 20}L1125 ${m - 25}L1210 ${m - 11}`);
  green(`M620 ${m}L1210 ${m - 11}`);
}

// face panels with round openings
for (const [o, k] of [[0, 363.5], [187.5, 551.5]]) {
  red(`M618.500 ${k}H1140.500V${k + 186}H618.500Z`);
  red(`M732.500 ${k + 20}H867.500V${k + 70}H732.500Z`);
  for (const [x, y, q] of [[669.5, 405.5, 29.3], [927, 409, 26.5], [1002, 408, 26.5], [1077.4, 409, 26.3], [668.5, 494.5, 29.2], [759.5, 496.7, 29.2], [846.5, 497.5, 29.2], [928.5, 500.5, 29.2], [1006, 501.8, 29.2], [1083.7, 498.8, 29.2]]) circle(x, y + o, q);
  green(`M619 ${548 + o}L668 ${378 + o}`);
  green(`M673 ${376 + o}L926 ${382.5 + o}H1073L675 ${465 + o}L1005 ${473 + o}L1083 ${469 + o}L804 ${384 + o}L1141 ${456.5 + o}L620 ${549 + o}`);
}

// short parts
const colA = [376.5, 398.5, 420.5, 443.5, 465.5, 487.5, 510.5, 532.5, 554.5, 576.5, 599.5, 621.5, 643.5, 666.5, 688.5, 710.5];
const colB = [130.5, 152.5, 175.5, 197.5, 219.5, 242.5, 264.5, 286.5, 309.5, 331.5, 353.5, ...colA];
const part = (x, t) => {
  red(`M${x} ${t + 11}H${x + 11}V${t}H${x + 67}V${t + 11}H${x + 78}V${t + 21}H${x}Z`);
  out.push(`<path d="M${x} ${t + 20.5}L${x + 78} ${t + 15.5}" stroke="#0f0" stroke-dasharray="7 1.500"/><path d="M${x + 78} ${t + 16}h2" stroke="red"/>`);
};
colA.forEach((t, i) => part(i < 8 ? 1146.5 : 1147.5, t));
colB.forEach((t, i) => part(i < 20 ? 1227.5 : 1228.5, t + (i > 20 ? 1 : 0)));

// tall strips
for (const [l, s, x, w] of [[1307.5, 154.5, 1335.5, 1354.5], [1358.5, 153.5, 1386.5, 1405.5], [1407.5, 154.5, 1434.5, 1454.5]]) {
  red(`M${l} ${s}H${x}V141.500H${w}V734.500H${l}Z`);
  const c = l + 22.5;
  for (const y of [227, 440.5, 654]) out.push(`<rect x="${c - 5}" y="${y - 2}" width="10" height="4" rx="2" stroke="red"/>`);
  green(`M${x + 9} 142L${c} 226M${c} 232L${c + 5} 437M${c} 445L${c + 5} 651M${c + 1} 657L${w - 1} 731L${x + 9} 142`);
}

// sheet bounds and transitions
out.push('<path d="M315 149.500H1456.500V736.500H315" stroke="#000"/>');
black('M315.500 266V736'); black('M618.500 168V736'); black('M1146.500 400V731'); black('M1227.500 152V731');
black('M317 280L614 734', '5 5'); black('M620 167L1146 731', '5.500 6'); black('M1148 400L1227 731'); black('M1228 153L1354 731');
red('M618 737.500H1140');
out.push('<rect x="314" y="735" width="2" height="3" fill="#00f"/><text x="336" y="727" font-size="15" font-weight="bold" fill="#0000d0" font-family="DejaVu Sans, sans-serif" textLength="9" lengthAdjust="spacingAndGlyphs">1</text>');
document.getElementById('sheet').innerHTML = out.join('');
</script>
</body>
</html>
